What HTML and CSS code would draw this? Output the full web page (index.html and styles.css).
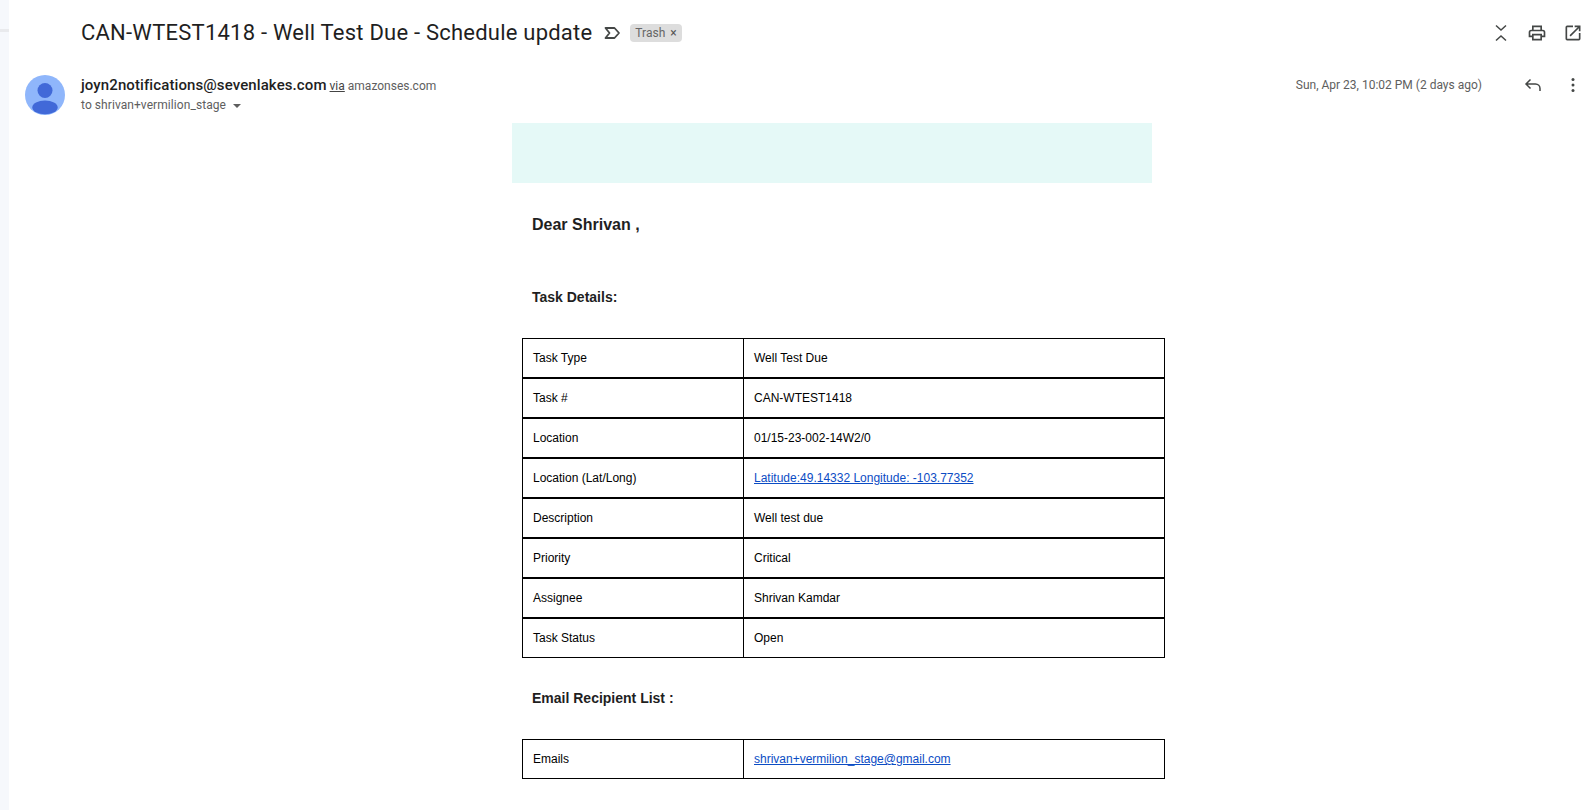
FILE: index.html
```html
<!DOCTYPE html>
<html lang="en">
<head>
  <meta charset="UTF-8" />
  <title>CAN-WTEST1418 - Well Test Due - Schedule update</title>
  <link rel="stylesheet" href="styles.css">
</head>
<body>
  <div class="rail"><div class="rail-line"></div></div>

  <div class="thread">
    <div class="subject-row">
      <h1 class="subject">CAN-WTEST1418 - Well Test Due - Schedule update</h1>
      <svg class="marker" width="20" height="20" viewBox="0 0 20 20"><path d="M3.5 5h9l4.5 5-4.5 5h-9l4-5z" fill="none" stroke="#444746" stroke-width="1.8" stroke-linejoin="round"/></svg>
      <span class="label">Trash<span class="label-x">×</span></span>
      <div class="top-icons">
        <svg width="20" height="20" viewBox="0 0 20 20"><path d="M5 2.5l5 4.5 5-4.5M5 17.5l5-4.5 5 4.5" fill="none" stroke="#444746" stroke-width="1.5"/></svg>
        <svg width="20" height="20" viewBox="0 0 24 24"><path d="M19 8h-1V3H6v5H5a3 3 0 0 0-3 3v6h4v4h12v-4h4v-6a3 3 0 0 0-3-3zM8 5h8v3H8zm8 14H8v-4h8zm4-4h-2v-2H6v2H4v-4a1 1 0 0 1 1-1h14a1 1 0 0 1 1 1z" fill="#444746"/></svg>
        <svg width="20" height="20" viewBox="0 0 24 24"><path d="M19 19H5V5h7V3H5a2 2 0 0 0-2 2v14a2 2 0 0 0 2 2h14a2 2 0 0 0 2-2v-7h-2zM14 3v2h3.6l-9.8 9.8 1.4 1.4L19 6.4V10h2V3z" fill="#444746"/></svg>
      </div>
    </div>

    <div class="message-head">
      <svg class="avatar" width="40" height="40" viewBox="0 0 40 40">
        <circle cx="20" cy="20" r="20" fill="#8fb6fb"/>
        <circle cx="20" cy="15.5" r="7.5" fill="#4169d8"/>
        <ellipse cx="20" cy="32.4" rx="12.7" ry="6.8" fill="#4169d8"/>
      </svg>
      <div class="sender">
        <div class="from"><b>joyn2notifications@sevenlakes.com</b> <u>via</u> <span class="via">amazonses.com</span></div>
        <div class="to">to shrivan+vermilion_stage <span class="caret"></span></div>
      </div>
      <div class="date">Sun, Apr 23, 10:02 PM (2 days ago)</div>
      <div class="msg-icons">
        <svg width="20" height="20" viewBox="0 0 20 20"><path d="M7.5 4.5L3 9l4.5 4.5M3 9h9.5a4.5 4.5 0 0 1 4.5 4.5V16" fill="none" stroke="#444746" stroke-width="1.5"/></svg>
        <svg width="20" height="20" viewBox="0 0 20 20"><circle cx="10" cy="4.5" r="1.5" fill="#444746"/><circle cx="10" cy="10" r="1.5" fill="#444746"/><circle cx="10" cy="15.5" r="1.5" fill="#444746"/></svg>
      </div>
    </div>

    <div class="message-body">
      <div class="mail">
        <div class="mail-banner"></div>
        <p class="greeting">Dear Shrivan ,</p>
        <p class="section task-title">Task Details:</p>
        <table class="info">
          <tr><td>Task Type</td><td>Well Test Due</td></tr>
          <tr><td>Task #</td><td>CAN-WTEST1418</td></tr>
          <tr><td>Location</td><td>01/15-23-002-14W2/0</td></tr>
          <tr><td>Location (Lat/Long)</td><td><a href="#">Latitude:49.14332 Longitude: -103.77352</a></td></tr>
          <tr><td>Description</td><td>Well test due</td></tr>
          <tr><td>Priority</td><td>Critical</td></tr>
          <tr><td>Assignee</td><td>Shrivan Kamdar</td></tr>
          <tr><td>Task Status</td><td>Open</td></tr>
        </table>
        <p class="section list-title">Email Recipient List :</p>
        <table class="info">
          <tr><td>Emails</td><td><a href="#">shrivan+vermilion_stage@gmail.com</a></td></tr>
        </table>
      </div>
    </div>
  </div>
</body>
</html>
```

FILE: styles.css
```css
html, body {
  height: 100%;
}

body {
  margin: 0;
  display: flex;
  overflow: hidden;
  background: #fff;
  color: #1f1f1f;
  font-family: Roboto, 'Liberation Sans', sans-serif;
}

.rail {
  width: 9px;
  flex: none;
  background: #f6f8fc;
}

.rail-line {
  height: 3px;
  margin-top: 29px;
  background: #e9eaed;
}

.thread {
  flex: 1;
  min-width: 0;
  padding-right: 9px;
}

/* Subject line */
.subject-row {
  display: flex;
  align-items: center;
  height: 65px;
  padding-left: 72px;
}

.subject {
  margin: 0;
  font-size: 22px;
  font-weight: 400;
  letter-spacing: 0.22px;
  white-space: nowrap;
}

.marker {
  margin-left: 10px;
}

.label {
  margin-left: 8px;
  padding: 0 5px;
  height: 18px;
  line-height: 18px;
  border-radius: 4px;
  background: #dddddd;
  color: #666;
  font-size: 12px;
}

.label-x {
  margin-left: 5px;
  color: #555;
}

.top-icons {
  margin-left: auto;
  display: flex;
  gap: 16px;
}

/* Sender row */
.message-head {
  display: flex;
  height: 58px;
  padding-left: 16px;
  padding-top: 10px;
  box-sizing: border-box;
}

.avatar {
  flex: none;
}

.sender {
  margin-left: 16px;
}

.from {
  font-size: 12px;
  line-height: 20px;
  color: #444;
}

.from b {
  font-size: 15px;
  font-weight: 500;
  letter-spacing: 0.1px;
  color: #1f1f1f;
}

.via {
  color: #5e5e5e;
}

.to {
  margin-top: -1px;
  font-size: 12px;
  line-height: 20px;
  letter-spacing: 0.07px;
  color: #5e5e5e;
}

.caret {
  display: inline-block;
  margin-left: 4px;
  vertical-align: middle;
  border: 4px solid transparent;
  border-top: 4px solid #5e5e5e;
  border-bottom: 0;
}

.date {
  margin-left: auto;
  font-size: 12px;
  line-height: 20px;
  color: #5e5e5e;
}

.msg-icons {
  display: flex;
  gap: 20px;
  margin-left: 41px;
}

/* Email body */
.message-body {
  padding-left: 72px;
}

.mail {
  width: 640px;
  margin: 0 auto;
  font-family: 'Liberation Sans', Arial, sans-serif;
}

.mail-banner {
  height: 60px;
  background: #e5f9f7;
}

.greeting {
  margin: 33px 0 0 20px;
  font-size: 16px;
  line-height: 18px;
  font-weight: 700;
}

.section {
  margin: 0 0 0 20px;
  font-size: 14px;
  line-height: 16px;
  font-weight: 700;
}

.task-title {
  margin-top: 55px;
}

.list-title {
  margin-top: 32px;
}

.info {
  width: 643px;
  margin: 33px 0 0 10px;
  border-collapse: separate;
  border-spacing: 0;
  table-layout: fixed;
  font-size: 12px;
  color: #000;
}

.info td {
  height: 40px;
  box-sizing: border-box;
  padding: 0 10px;
  border: 1px solid #000;
  border-left: 0;
}

.info td:first-child {
  width: 222px;
  border-left: 1px solid #000;
}

.info a {
  color: #0b4cc4;
}
```
